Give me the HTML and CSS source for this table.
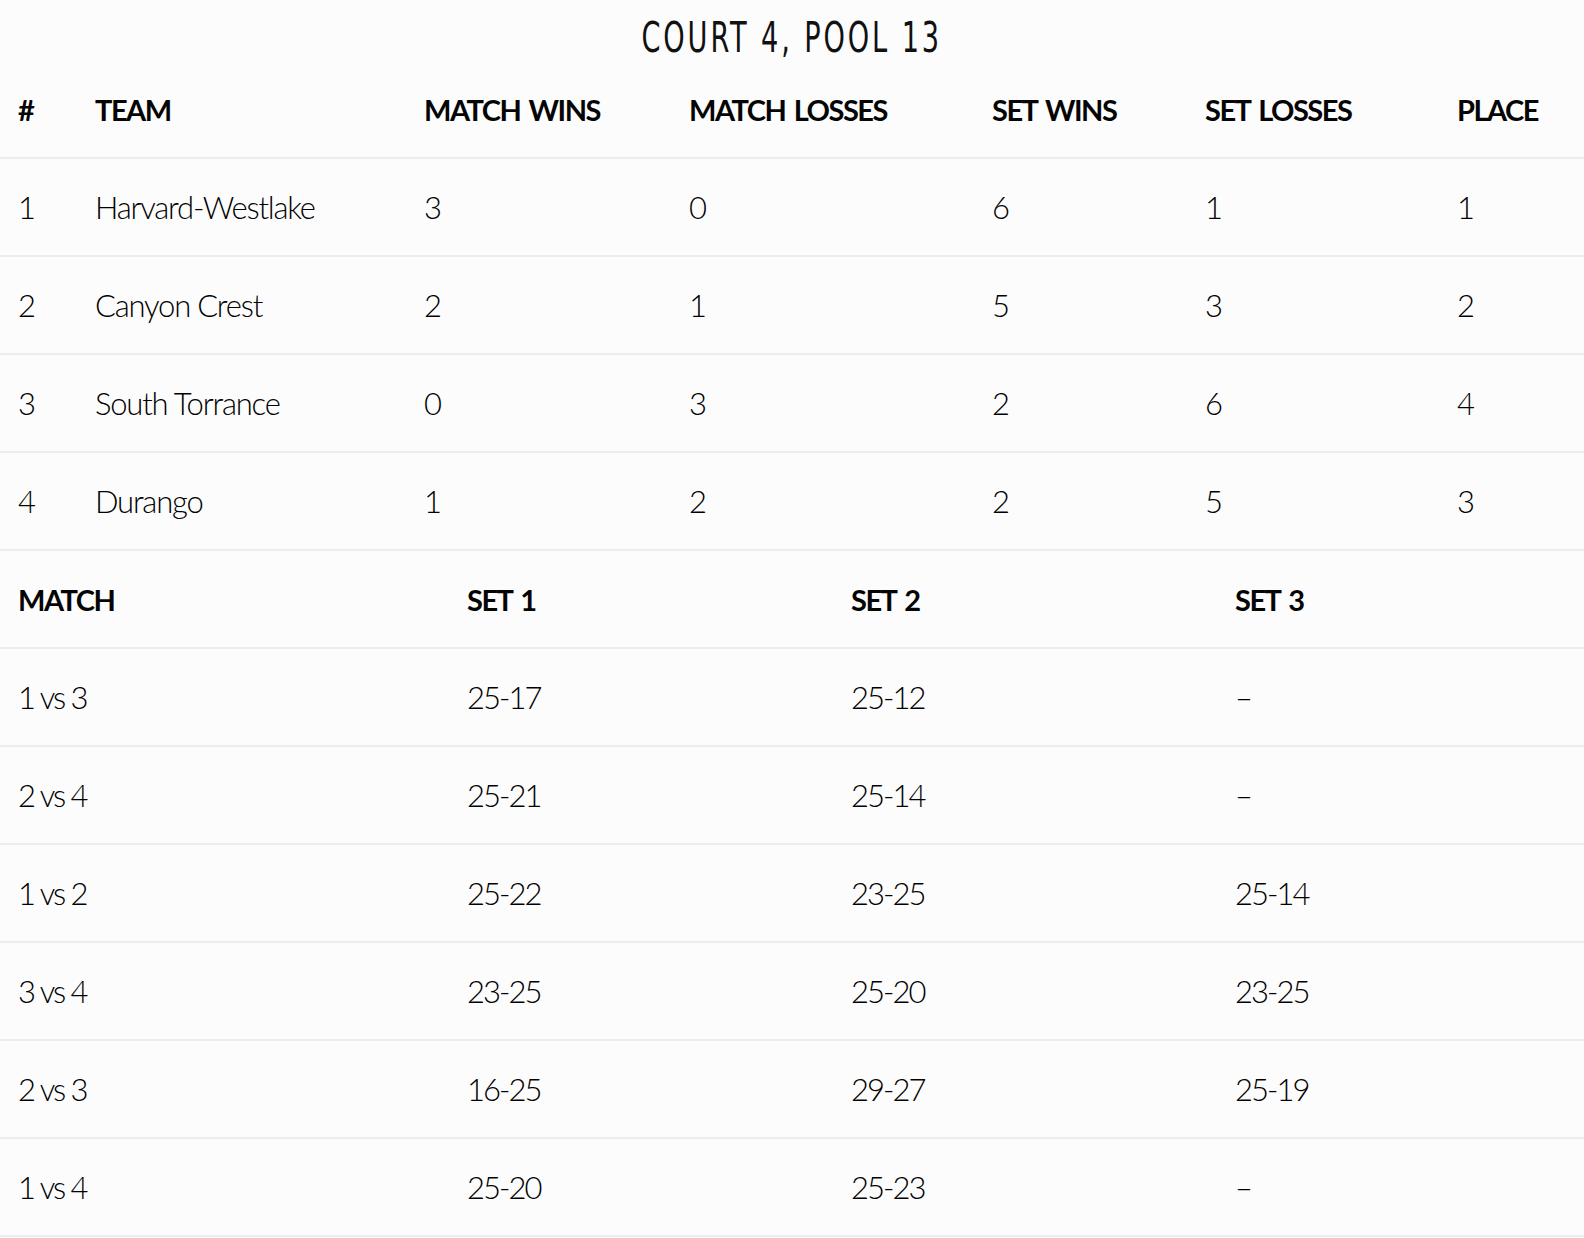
FILE: index.html
```html
<!DOCTYPE html>
<html lang="en">
<head>
<meta charset="utf-8">
<title>Court 4, Pool 13</title>
<link rel="stylesheet" href="styles.css">
</head>
<body>
<header class="title-bar">
  <h1 class="title">COURT 4, POOL 13</h1>
</header>
<table class="grid standings">
  <colgroup>
    <col class="c-num"><col class="c-team"><col class="c-mw"><col class="c-ml"><col class="c-sw"><col class="c-sl"><col class="c-pl">
  </colgroup>
  <thead>
    <tr><th>#</th><th>TEAM</th><th>MATCH WINS</th><th>MATCH LOSSES</th><th>SET WINS</th><th>SET LOSSES</th><th>PLACE</th></tr>
  </thead>
  <tbody>
    <tr><td class="num">1</td><td>Harvard-Westlake</td><td class="num">3</td><td class="num">0</td><td class="num">6</td><td class="num">1</td><td class="num">1</td></tr>
    <tr><td class="num">2</td><td>Canyon Crest</td><td class="num">2</td><td class="num">1</td><td class="num">5</td><td class="num">3</td><td class="num">2</td></tr>
    <tr><td class="num">3</td><td>South Torrance</td><td class="num">0</td><td class="num">3</td><td class="num">2</td><td class="num">6</td><td class="num">4</td></tr>
    <tr><td class="num">4</td><td>Durango</td><td class="num">1</td><td class="num">2</td><td class="num">2</td><td class="num">5</td><td class="num">3</td></tr>
  </tbody>
</table>
<table class="grid matches">
  <colgroup>
    <col class="c-match"><col class="c-set"><col class="c-set"><col class="c-set3">
  </colgroup>
  <thead>
    <tr><th>MATCH</th><th>SET 1</th><th>SET 2</th><th>SET 3</th></tr>
  </thead>
  <tbody>
    <tr><td class="num">1 vs 3</td><td class="num">25-17</td><td class="num">25-12</td><td class="num">–</td></tr>
    <tr><td class="num">2 vs 4</td><td class="num">25-21</td><td class="num">25-14</td><td class="num">–</td></tr>
    <tr><td class="num">1 vs 2</td><td class="num">25-22</td><td class="num">23-25</td><td class="num">25-14</td></tr>
    <tr><td class="num">3 vs 4</td><td class="num">23-25</td><td class="num">25-20</td><td class="num">23-25</td></tr>
    <tr><td class="num">2 vs 3</td><td class="num">16-25</td><td class="num">29-27</td><td class="num">25-19</td></tr>
    <tr><td class="num">1 vs 4</td><td class="num">25-20</td><td class="num">25-23</td><td class="num">–</td></tr>
  </tbody>
</table>
</body>
</html>
```
FILE: styles.css
```css
html, body {
  margin: 0;
  padding: 0;
  background: #fcfcfc;
  color: #000;
}
body {
  font-family: Lato, "Open Sans", sans-serif;
}
.title-bar {
  height: 61px;
  box-sizing: border-box;
  padding-top: 16px;
  text-align: center;
}
.title {
  display: inline-block;
  margin: 0;
  line-height: 44px;
  font-family: "Liberation Sans Narrow", "DejaVu Sans Condensed", sans-serif;
  font-weight: 400;
  font-size: 42px;
  letter-spacing: 4px;
  transform: scaleX(0.72);
  color: #111;
}
.grid {
  width: 100%;
  border-collapse: collapse;
  table-layout: fixed;
}
.grid th, .grid td {
  height: 96px;
  padding: 0 0 0 18px;
  text-align: left;
  vertical-align: middle;
  border-bottom: 2px solid #ededed;
  white-space: nowrap;
}
.grid th {
  font-weight: 700;
  font-size: 29px;
  letter-spacing: -1.5px;
  word-spacing: 3px;
  color: #050505;
}
.grid td {
  font-weight: 300;
  font-size: 31px;
  letter-spacing: -1.2px;
}
.grid td.num {
  letter-spacing: -2px;
}
.c-num { width: 77px; }
.c-team { width: 329px; }
.c-mw { width: 265px; }
.c-ml { width: 303px; }
.c-sw { width: 213px; }
.c-sl { width: 252px; }
.c-pl { width: 145px; }
.c-match { width: 449px; }
.c-set { width: 384px; }
.c-set3 { width: 367px; }
```
